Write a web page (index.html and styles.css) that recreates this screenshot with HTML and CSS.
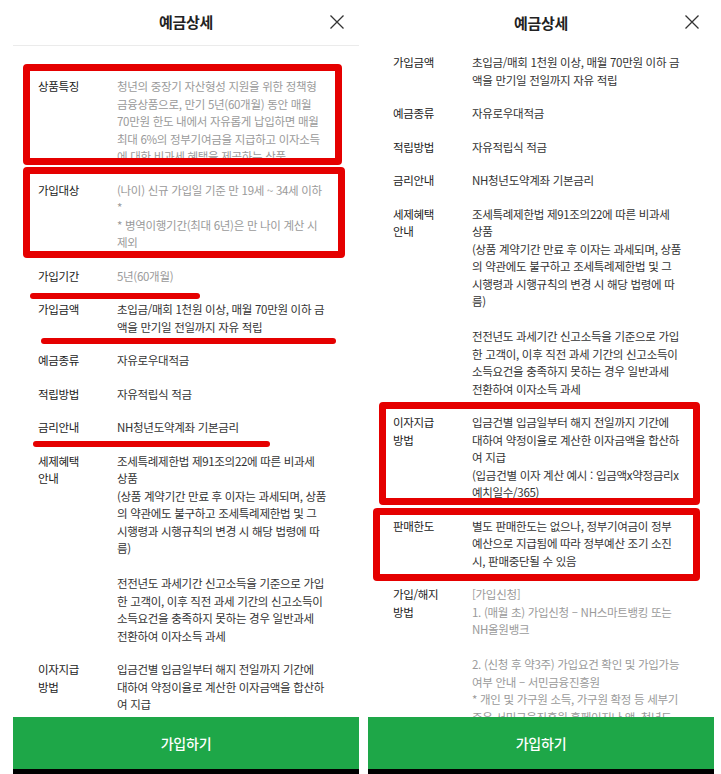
FILE: index.html
```html
<!DOCTYPE html>
<html lang="ko">
<head>
<meta charset="utf-8">
<link rel="stylesheet" href="styles.css">
</head>
<body>
<div class="page">
  <div class="screens">
    <section class="panel">
      <header class="header with-line">
        <span></span>
        <h1 class="title">예금상세</h1>
        <button class="close" aria-label="닫기"><svg viewBox="0 0 16 16" width="16" height="16"><path d="M1.5 1.5 L14.5 14.5 M14.5 1.5 L1.5 14.5" stroke="#333" stroke-width="1.3" fill="none"/></svg></button>
      </header>
      <div class="content first">
        <div class="row"><div class="label">상품특징</div><div class="value muted">청년의 중장기 자산형성 지원을 위한 정책형<br>금융상품으로, 만기 5년(60개월) 동안 매월<br>70만원 한도 내에서 자유롭게 납입하면 매월<br>최대 6%의 정부기여금을 지급하고 이자소득<br>에 대한 비과세 혜택을 제공하는 상품</div></div>
        <div class="row"><div class="label">가입대상</div><div class="value muted">(나이) 신규 가입일 기준 만 19세 ~ 34세 이하<br>*<br>* 병역이행기간(최대 6년)은 만 나이 계산 시<br>제외</div></div>
        <div class="row"><div class="label">가입기간</div><div class="value muted">5년(60개월)</div></div>
        <div class="row"><div class="label">가입금액</div><div class="value">초입금/매회 1천원 이상, 매월 70만원 이하 금<br>액을 만기일 전일까지 자유 적립</div></div>
        <div class="row"><div class="label">예금종류</div><div class="value">자유로우대적금</div></div>
        <div class="row"><div class="label">적립방법</div><div class="value">자유적립식 적금</div></div>
        <div class="row"><div class="label">금리안내</div><div class="value">NH청년도약계좌 기본금리</div></div>
        <div class="row"><div class="label">세제혜택<br>안내</div><div class="value">조세특례제한법 제91조의22에 따른 비과세<br>상품<br>(상품 계약기간 만료 후 이자는 과세되며, 상품<br>의 약관에도 불구하고 조세특례제한법 및 그<br>시행령과 시행규칙의 변경 시 해당 법령에 따<br>름)<br><br>전전년도 과세기간 신고소득을 기준으로 가입<br>한 고객이, 이후 직전 과세 기간의 신고소득이<br>소득요건을 충족하지 못하는 경우 일반과세<br>전환하여 이자소득 과세</div></div>
        <div class="row"><div class="label">이자지급<br>방법</div><div class="value">입금건별 입금일부터 해지 전일까지 기간에<br>대하여 약정이율로 계산한 이자금액을 합산하<br>여 지급<br>(입금건별 이자 계산 예시 : 입금액x약정금리x<br>예치일수/365)</div></div>
      </div>
      <button class="join">가입하기</button>
      <div class="navbar"></div>
    </section>

    <section class="panel">
      <header class="header">
        <span></span>
        <h1 class="title">예금상세</h1>
        <button class="close" aria-label="닫기"><svg viewBox="0 0 16 16" width="16" height="16"><path d="M1.5 1.5 L14.5 14.5 M14.5 1.5 L1.5 14.5" stroke="#333" stroke-width="1.3" fill="none"/></svg></button>
      </header>
      <div class="content scrolled">
        <div class="row"><div class="label">가입금액</div><div class="value">초입금/매회 1천원 이상, 매월 70만원 이하 금<br>액을 만기일 전일까지 자유 적립</div></div>
        <div class="row"><div class="label">예금종류</div><div class="value">자유로우대적금</div></div>
        <div class="row"><div class="label">적립방법</div><div class="value">자유적립식 적금</div></div>
        <div class="row"><div class="label">금리안내</div><div class="value">NH청년도약계좌 기본금리</div></div>
        <div class="row"><div class="label">세제혜택<br>안내</div><div class="value">조세특례제한법 제91조의22에 따른 비과세<br>상품<br>(상품 계약기간 만료 후 이자는 과세되며, 상품<br>의 약관에도 불구하고 조세특례제한법 및 그<br>시행령과 시행규칙의 변경 시 해당 법령에 따<br>름)<br><br>전전년도 과세기간 신고소득을 기준으로 가입<br>한 고객이, 이후 직전 과세 기간의 신고소득이<br>소득요건을 충족하지 못하는 경우 일반과세<br>전환하여 이자소득 과세</div></div>
        <div class="row"><div class="label">이자지급<br>방법</div><div class="value">입금건별 입금일부터 해지 전일까지 기간에<br>대하여 약정이율로 계산한 이자금액을 합산하<br>여 지급<br>(입금건별 이자 계산 예시 : 입금액x약정금리x<br>예치일수/365)</div></div>
        <div class="row"><div class="label">판매한도</div><div class="value">별도 판매한도는 없으나, 정부기여금이 정부<br>예산으로 지급됨에 따라 정부예산 조기 소진<br>시, 판매중단될 수 있음</div></div>
        <div class="row"><div class="label">가입/해지<br>방법</div><div class="value muted">[가입신청]<br>1. (매월 초) 가입신청 – NH스마트뱅킹 또는<br>NH올원뱅크<br><br>2. (신청 후 약3주) 가입요건 확인 및 가입가능<br>여부 안내 – 서민금융진흥원<br>* 개인 및 가구원 소득, 가구원 확정 등 세부기<br>준은 서민금융진흥원 홈페이지나 앱, 청년도<br>약계좌 안내 참고</div></div>
      </div>
      <button class="join">가입하기</button>
      <div class="navbar"></div>
    </section>
  </div>

  <div class="mark box b1"></div>
  <div class="mark box b2"></div>
  <div class="mark line l1"></div>
  <div class="mark line l2"></div>
  <div class="mark line l3"></div>
  <div class="mark box b3"></div>
  <div class="mark box b4"></div>
</div>
</body>
</html>
```
FILE: styles.css
```css
* { box-sizing: border-box; }
html, body { margin: 0; padding: 0; background: #fff; }
body {
  font-family: "Noto Sans CJK KR", "Noto Sans", sans-serif;
  color: #222;
  width: 721px;
  height: 774px;
  overflow: hidden;
}
.page { position: relative; width: 721px; height: 774px; }
.screens {
  display: flex;
  gap: 9px;
  padding-left: 13px;
  height: 774px;
}
.panel {
  width: 346px;
  height: 774px;
  display: flex;
  flex-direction: column;
  background: #fff;
}
.header {
  height: 46px;
  flex: none;
  display: grid;
  grid-template-columns: 1fr auto 1fr;
  align-items: center;
  padding: 0 14px 2px 14px;
}
.header.with-line { border-bottom: 1px solid #ebebeb; }
.title {
  margin: 0;
  font-size: 15px;
  font-weight: 700;
  color: #222;
  letter-spacing: -0.3px;
}
.close {
  justify-self: end;
  border: 0;
  background: none;
  padding: 0;
  width: 16px;
  height: 16px;
  display: flex;
}
.content {
  flex: 1;
  overflow: hidden;
  display: flex;
  flex-direction: column;
  gap: 16px;
  padding: 0 6px 0 25px;
  font-size: 11.5px;
  line-height: 17.5px;
  letter-spacing: -0.3px;
}
.content.first { padding-top: 32px; }
.content.scrolled { padding-top: 8px; }
.row {
  display: grid;
  grid-template-columns: 79px 1fr;
  flex: none;
}
.label { color: #222; }
.value { color: #333; white-space: nowrap; }
.value.muted { color: #9a9a9a; }
.join {
  flex: none;
  height: 52px;
  border: 0;
  background: #1ea748;
  color: #fff;
  font-family: inherit;
  font-size: 14px;
  font-weight: 500;
  letter-spacing: -0.2px;
}
.navbar { flex: none; height: 5px; background: #000; }

.mark { position: absolute; }
.box { border: 7px solid #e50000; border-radius: 4px; }
.line { height: 6px; background: #e50000; border-radius: 3px; }
.b1 { left: 23px; top: 64px; width: 319px; height: 101px; }
.b2 { left: 23px; top: 167px; width: 322px; height: 91px; }
.l1 { left: 30px; top: 293px; width: 170px; }
.l2 { left: 41px; top: 338px; width: 295px; }
.l3 { left: 33px; top: 441px; width: 237px; }
.b3 { left: 379px; top: 402px; width: 321px; height: 103px; }
.b4 { left: 373px; top: 508px; width: 327px; height: 73px; }
```
